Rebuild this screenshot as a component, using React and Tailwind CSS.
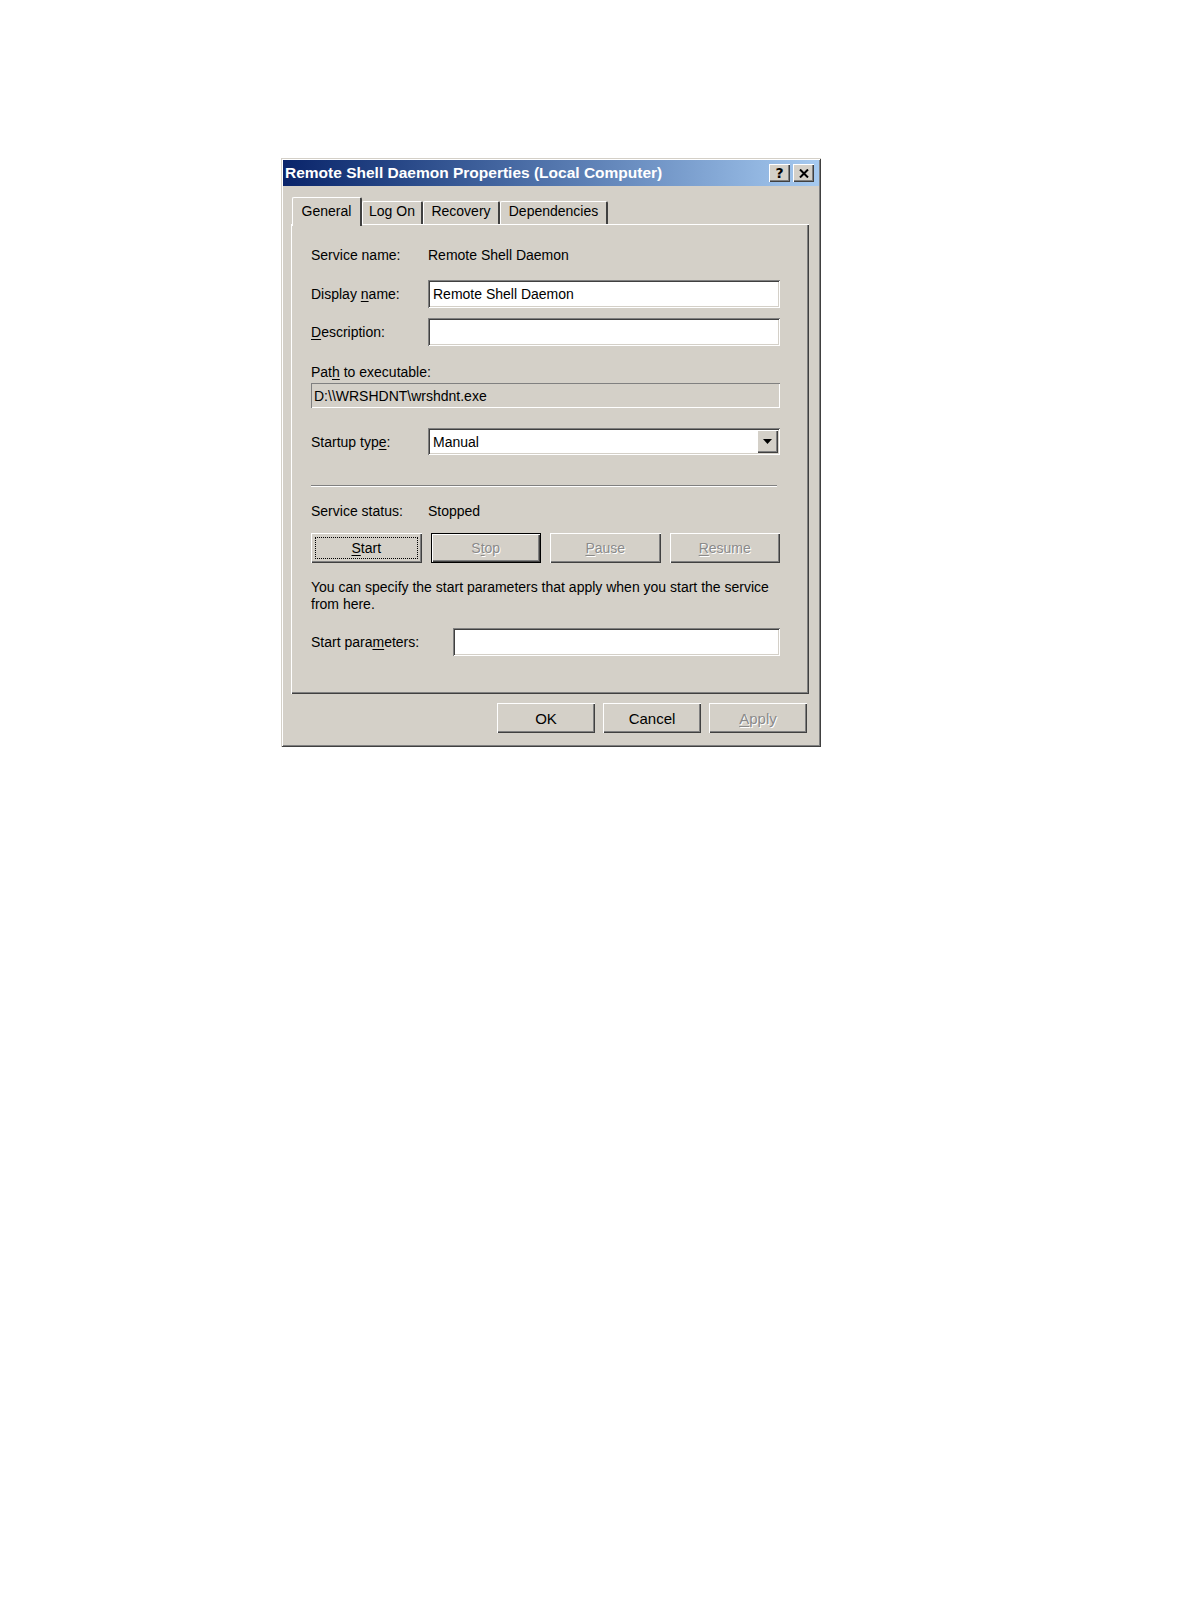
import React from "react";

// classic 3D edges
const raised = "shadow-[inset_1px_1px_0_#ffffff,inset_-1px_-1px_0_#404040,inset_-2px_-2px_0_#808080]";
const sunken = "shadow-[inset_1px_1px_0_#808080,inset_-1px_-1px_0_#ffffff,inset_2px_2px_0_#404040,inset_-2px_-2px_0_#d4d0c8]";
const disabled = "text-[#8a8a8a] [text-shadow:1px_1px_0_#ffffff]";

const U = ({ children }) => <span className="underline underline-offset-2 decoration-1">{children}</span>;

const Label = ({ children, w = "w-[117px]" }) => (
    <div className={`${w} shrink-0 whitespace-nowrap`}>{children}</div>
);

const Input = ({ value, className = "" }) => (
    <div className={`bg-white ${sunken} h-[28px] flex items-center pl-[5px] ${className}`}>
        {value}
    </div>
);

const TitleButton = ({ children }) => (
    <div className={`w-[21px] h-[18px] bg-[#d4d0c8] ${raised} flex items-center justify-center`}>
        {children}
    </div>
);

const Tab = ({ children, selected, w }) => (
    <div
        className={
            selected
                ? `${w} h-[29px] -mb-[2px] z-10 bg-[#d4d0c8] rounded-t-[2px] border-l border-t border-white border-r-2 border-r-[#404040] flex items-start justify-center pt-[6px]`
                : `${w} h-[23px] bg-[#d4d0c8] rounded-t-[2px] border-l border-t border-white border-r-2 border-r-[#404040] flex items-start justify-center pt-[2px]`
        }
    >
        {children}
    </div>
);

const ServiceButton = ({ children, focus, isDefault, off }) => (
    <div
        className={`h-[30px] bg-[#d4d0c8] ${raised} flex items-center justify-center ${off ? disabled : ""} ${isDefault ? "border border-black" : ""}`}
    >
        {focus ? (
            <div className="w-[calc(100%-8px)] h-[22px] border border-dotted border-black flex items-center justify-center">
                {children}
            </div>
        ) : (
            children
        )}
    </div>
);

const DialogButton = ({ children, off }) => (
    <div className={`w-[98px] h-[30px] bg-[#d4d0c8] ${raised} flex items-center justify-center text-[15px] ${off ? disabled : ""}`}>
        {children}
    </div>
);

export default function App() {
    return (
        <div className="min-h-[1616px] w-full bg-white pt-[158px] pl-[281px] font-['Liberation_Sans',Arial,sans-serif] text-[14px] text-black leading-none">
            <div className="w-[540px] h-[589px] bg-[#d4d0c8] p-[2px] shadow-[inset_1px_1px_0_#d4d0c8,inset_-1px_-1px_0_#404040,inset_2px_2px_0_#ffffff,inset_-2px_-2px_0_#808080]">
                {/* title bar */}
                <div className="h-[26px] bg-linear-to-r from-[#0a246a] to-[#a6caf0] flex items-center pl-[2px] pr-[5px]">
                    <div className="flex-1 text-white font-bold text-[15.5px] whitespace-nowrap">
                        Remote Shell Daemon Properties (Local Computer)
                    </div>
                    <div className="flex gap-[3px]">
                        <TitleButton>
                            <span className="font-bold text-[14px] font-['DejaVu_Sans',sans-serif]">?</span>
                        </TitleButton>
                        <TitleButton>
                            <svg width="10" height="9" viewBox="0 0 10 9">
                                <path d="M1 0.5 L9 8.5 M9 0.5 L1 8.5" stroke="#000" strokeWidth="2" />
                            </svg>
                        </TitleButton>
                    </div>
                </div>

                {/* tabs */}
                <div className="flex items-end h-[28px] mt-[10px] ml-[9px]">
                    <Tab selected w="w-[70px]">General</Tab>
                    <Tab w="w-[61px]">Log On</Tab>
                    <Tab w="w-[77px]">Recovery</Tab>
                    <Tab w="w-[108px]">Dependencies</Tab>
                </div>

                {/* tab page */}
                <div className="ml-[8px] w-[518px] h-[470px] shadow-[inset_1px_1px_0_#ffffff,inset_-1px_-1px_0_#404040,inset_-2px_-2px_0_#808080] pl-[20px] pr-[29px] pt-[21px] flex flex-col">
                    <div className="flex items-center h-[20px]">
                        <Label>Service name:</Label>
                        <div>Remote Shell Daemon</div>
                    </div>

                    <div className="flex items-center h-[28px] mt-[15px]">
                        <Label>
                            Display <U>n</U>ame:
                        </Label>
                        <Input value="Remote Shell Daemon" className="flex-1" />
                    </div>

                    <div className="flex items-center h-[28px] mt-[10px]">
                        <Label>
                            <U>D</U>escription:
                        </Label>
                        <Input value="" className="flex-1" />
                    </div>

                    <div className="flex items-center h-[20px] mt-[16px]">
                        Pat<U>h</U>&nbsp;to executable:
                    </div>
                    <div className="h-[25px] mt-[1px] shadow-[inset_1px_1px_0_#808080,inset_-1px_-1px_0_#ffffff] flex items-center pl-[3px]">
                        D:\\WRSHDNT\wrshdnt.exe
                    </div>

                    <div className="flex items-center h-[27px] mt-[20px]">
                        <Label>
                            Startup typ<U>e</U>:
                        </Label>
                        <div className={`flex-1 h-[27px] bg-white ${sunken} flex items-center pl-[5px] pr-[2px]`}>
                            <div className="flex-1">Manual</div>
                            <div className={`w-[21px] h-[23px] bg-[#d4d0c8] ${raised} flex items-center justify-center`}>
                                <svg width="9" height="5" viewBox="0 0 9 5">
                                    <path d="M0 0 H9 L4.5 5 Z" fill="#000" />
                                </svg>
                            </div>
                        </div>
                    </div>

                    <div className="w-[466px] h-[2px] mt-[30px] border-t border-t-[#808080] border-b border-b-white" />

                    <div className="flex items-center h-[20px] mt-[14px]">
                        <Label>Service status:</Label>
                        <div>Stopped</div>
                    </div>

                    <div className="grid grid-cols-4 gap-[9px] mt-[12px]">
                        <ServiceButton focus>
                            <U>S</U>tart
                        </ServiceButton>
                        <ServiceButton isDefault off>
                            S<U>t</U>op
                        </ServiceButton>
                        <ServiceButton off>
                            <U>P</U>ause
                        </ServiceButton>
                        <ServiceButton off>
                            <U>R</U>esume
                        </ServiceButton>
                    </div>

                    <div className="mt-[16px] leading-[17px] whitespace-nowrap">
                        You can specify the start parameters that apply when you start the service
                        <br />
                        from here.
                    </div>

                    <div className="flex items-center h-[28px] mt-[15px]">
                        <Label w="w-[142px]">
                            Start para<U>m</U>eters:
                        </Label>
                        <Input value="" className="flex-1" />
                    </div>
                </div>

                {/* dialog buttons */}
                <div className="flex justify-end gap-[8px] mt-[9px] pr-[12px]">
                    <DialogButton>OK</DialogButton>
                    <DialogButton>Cancel</DialogButton>
                    <DialogButton off>
                        <U>A</U>pply
                    </DialogButton>
                </div>
            </div>
        </div>
    );
}
